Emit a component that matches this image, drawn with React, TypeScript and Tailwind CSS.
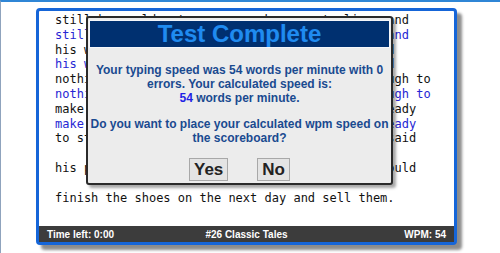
import React from 'react'

const lines: { text: string; typed: string }[] = [
	{ text: 'still he could not earn enough money to live, and', typed: 'still he could not earn enough money to live, and' },
	{ text: 'his wife grew poorer and poorer. At last he had', typed: 'his wife grew poorer and poorer. At last he had' },
	{ text: 'nothing left but one piece of leather just enough to', typed: 'nothing left but one piece of leather just enough to' },
	{ text: 'make one pair of shoes. He cut out the piece ready', typed: 'make one pair of shoes. He cut out the piece ready' },
	{ text: 'to stitch in the morning, and went to bed. He said', typed: '' },
	{ text: 'his prayers and hoped that in the morning he could', typed: '' },
	{ text: 'finish the shoes on the next day and sell them.', typed: '' },
]

const ResultModal: React.FC = () => {
	return (
		<div className="absolute left-[47px] top-[5px] w-[307px] h-[169px] border-2 border-[#2a2a2a] rounded-[3px] bg-[#ececec] shadow-[3px_3px_3px_rgba(0,0,0,0.35)] flex flex-col font-['Liberation_Sans',Arial,sans-serif]">
			<div className="mx-[2px] mt-[3px] h-[26px] bg-[#003070] outline outline-1 outline-[#f4f6fa] flex items-center justify-center">
				<h1 className="text-[24px] leading-none font-bold text-[#1f8bf0] [text-shadow:0_0_1px_#0a3a80]">
					Test Complete
				</h1>
			</div>

			<div className="mt-[16px] text-center text-[12px] leading-[14px] font-bold text-[#1a4a90] whitespace-nowrap">
				<p>
					Your typing speed was 54 words per minute with 0
					<br />
					errors. Your calculated speed is:
					<br />
					<span className="text-[#1f1fe6]">54</span> words per minute.
				</p>
				<p className="mt-[12px]">
					Do you want to place your calculated wpm speed on
					<br />
					the scoreboard?
				</p>
			</div>

			<div className="mt-[13px] flex justify-center gap-[29px]">
				<button className="h-[23px] px-[4px] bg-[#e4e4e4] border border-[#a8a8a8] text-[17px] leading-none font-bold text-[#222]">
					Yes
				</button>
				<button className="h-[23px] px-[4px] bg-[#e4e4e4] border border-[#a8a8a8] text-[17px] leading-none font-bold text-[#222]">
					No
				</button>
			</div>
		</div>
	)
}

const App: React.FC = () => {
	return (
		<div className="w-[500px] h-[253px] bg-white border-t-2 border-t-[#2f86d6] border-l border-l-[#8fa3bd] pt-[6px] pl-[35px] overflow-hidden">
			<div className="relative w-[421px] h-[237px] border-[3px] border-[#1565d8] rounded-[4px] bg-white shadow-[5px_5px_3px_rgba(0,0,0,0.45)] flex flex-col">
				<div className="flex-1 pl-[16px] pt-[2px] font-['DejaVu_Sans_Mono',monospace] text-[12px] leading-[14.8px] whitespace-pre">
					{lines.map((line, idx) => (
						<React.Fragment key={idx}>
							<div className="text-[#111]">{line.text}</div>
							<div className="text-[#2626d4] h-[14.8px]">{line.typed}</div>
						</React.Fragment>
					))}
				</div>

				<div className="h-[16px] bg-[#3c3c3c] text-white text-[10px] font-bold font-['Liberation_Sans',Arial,sans-serif] flex items-center px-[8px]">
					<span className="flex-1">Time left: 0:00</span>
					<span className="flex-1 text-center">#26 Classic Tales</span>
					<span className="flex-1 text-right">WPM: 54</span>
				</div>

				<ResultModal />
			</div>
		</div>
	)
}

export default App
